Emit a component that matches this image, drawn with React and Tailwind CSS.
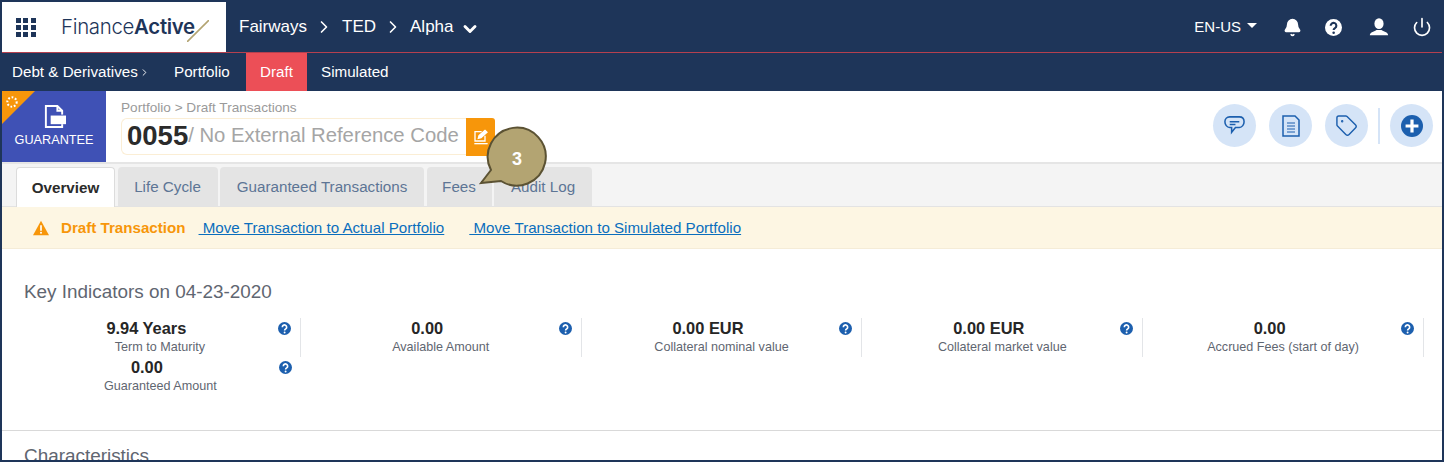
import { Bell, ChevronDown, ChevronRight, Power, Tag } from "lucide-react";

const tabs = ["Life Cycle", "Guaranteed Transactions", "Fees", "Audit Log"];
const tabWidths = ["w-[100px]", "w-[204px]", "w-[65px]", "w-[98px]"];

const indicators = [
  { value: "9.94 Years", label: "Term to Maturity" },
  { value: "0.00", label: "Available Amount" },
  { value: "0.00 EUR", label: "Collateral nominal value" },
  { value: "0.00 EUR", label: "Collateral market value" },
  { value: "0.00", label: "Accrued Fees (start of day)" },
];

function HelpDot() {
  return (
    <svg viewBox="0 0 24 24" className="h-[13px] w-[13px]">
      <circle cx="12" cy="12" r="12" fill="#1c5fae" />
      <path d="M8 9.5a4 4 0 1 1 6.3 3.2c-1.3.9-2.1 1.4-2.1 2.8" fill="none" stroke="#fff" strokeWidth="3" />
      <circle cx="12.2" cy="19.3" r="1.8" fill="#fff" />
    </svg>
  );
}

function Indicator({ value, label, divider = true }) {
  return (
    <div className={`relative flex h-[39px] flex-col items-center ${divider ? "border-r border-[#e3e5e8]" : ""}`}>
      <div className="pr-[27px] text-[16.4px] leading-[20px] font-bold text-[#262626]">{value}</div>
      <div className="mt-[1px] text-[12.6px] leading-[17px] text-[#5f6671]">{label}</div>
      <div className="absolute top-[4px] right-[9px]">
        <HelpDot />
      </div>
    </div>
  );
}

function RoundButton({ children }) {
  return (
    <div className="flex h-[43px] w-[43px] items-center justify-center rounded-full bg-[#d5e4f7]">{children}</div>
  );
}

export default function App() {
  return (
    <div className="h-[462px] w-[1444px] overflow-hidden border-2 border-[#1e3559] bg-white font-['Liberation_Sans',sans-serif]">
      {/* top bar */}
      <div className="flex h-[51px] items-stretch border-b border-[#b5404f] bg-[#1e3559]">
        <div className="flex w-[224px] items-center bg-white pl-[14px]">
          <div className="grid w-[20px] grid-cols-3 gap-[2px]">
            {Array.from({ length: 9 }).map((_, i) => (
              <div key={i} className="h-[5px] w-[5px] bg-[#1e3559]" />
            ))}
          </div>
          <div className="relative ml-[25px] font-['Inter',sans-serif] text-[20.4px] font-light tracking-[-0.3px] text-[#1e3559]">
            Finance<span className="font-semibold">Active</span>
            <svg viewBox="0 0 22 22" className="absolute top-[8px] -right-[14px] h-[22px] w-[22px]">
              <path d="M0 22 L22 0" stroke="#b3a472" strokeWidth="1.6" />
            </svg>
          </div>
        </div>
        <div className="flex items-center pl-[13px] text-[17px] text-white">
          <span>Fairways</span>
          <ChevronRight className="mr-[5px] ml-[7px] h-[20px] w-[20px]" strokeWidth={2} />
          <span className="ml-[3px]">TED</span>
          <ChevronRight className="mr-[5px] ml-[7px] h-[20px] w-[20px]" strokeWidth={2} />
          <span className="ml-[2px]">Alpha</span>
          <ChevronDown className="mt-[3px] ml-[6px] h-[20px] w-[20px]" strokeWidth={3.5} />
        </div>
        <div className="ml-auto flex items-center text-white">
          <span className="text-[15px]">EN-US</span>
          <div className="mb-[3px] ml-[6px] h-0 w-0 border-x-[5px] border-t-[5px] border-x-transparent border-t-white" />
          <Bell className="ml-[26px] h-[19px] w-[19px]" fill="#fff" />
          <div className="ml-[23px]">
            <svg viewBox="0 0 24 24" className="h-[17px] w-[17px]">
              <circle cx="12" cy="12" r="12" fill="#fff" />
              <path d="M8 9.5a4 4 0 1 1 6.3 3.2c-1.3.9-2.1 1.4-2.1 2.8" fill="none" stroke="#1e3559" strokeWidth="3" />
              <circle cx="12.2" cy="19.3" r="1.8" fill="#1e3559" />
            </svg>
          </div>
          <svg viewBox="0 0 24 24" className="ml-[27px] h-[20px] w-[20px]" fill="#fff">
            <ellipse cx="12" cy="8" rx="5.5" ry="6.5" />
            <path d="M1 22c0-4 6-5 8-6.5h6c2 1.500 8 2.500 8 6.500z" />
          </svg>
          <Power className="mr-[10px] ml-[23px] h-[20px] w-[20px]" strokeWidth={2} />
        </div>
      </div>

      {/* section nav */}
      <div className="flex h-[38px] items-stretch bg-[#1e3559] text-[15.2px] text-white">
        <div className="flex w-[172px] items-center pl-[10px]">
          Debt &amp; Derivatives
          <ChevronRight className="ml-[1px] h-[13px] w-[11px]" strokeWidth={2} />
        </div>
        <div className="flex w-[72px] items-center">Portfolio</div>
        <div className="flex w-[61px] items-center justify-center bg-[#ec4f57]">Draft</div>
        <div className="ml-[14px] flex items-center">Simulated</div>
      </div>

      {/* transaction header */}
      <div className="flex h-[73px] items-stretch border-b-2 border-[#e5e5e5] bg-white">
        <div className="relative flex w-[104px] flex-col items-center bg-[#3f51b5] pt-[14px] text-white">
          <div className="absolute top-0 left-0 h-0 w-0 border-t-[33px] border-r-[33px] border-t-[#f7960a] border-r-transparent" />
          <svg viewBox="0 0 24 24" className="absolute top-[4px] left-[3px] h-[14px] w-[14px]" fill="none">
            <circle cx="12" cy="12" r="8" stroke="#fff" strokeWidth="3.500" strokeDasharray="3 3" />
          </svg>
          <svg viewBox="0 0 24 24" className="h-[23px] w-[23px]">
            <path d="M3 1h12l5 5v17H3z" fill="none" stroke="#fff" strokeWidth="2" />
            <path d="M15 1v5h5" fill="none" stroke="#fff" strokeWidth="2" />
            <rect x="7" y="10" width="17" height="10" fill="#3f51b5" />
            <rect x="8" y="11" width="16" height="9" fill="#fff" />
          </svg>
          <div className="mt-[5px] text-[12.7px] leading-[15px]">GUARANTEE</div>
        </div>
        <div className="ml-[15px] flex flex-col pt-[9px]">
          <div className="text-[13.6px] leading-[15px] text-[#9a9a9a]">Portfolio &gt; Draft Transactions</div>
          <div className="mt-[3px] flex">
            <div className="flex h-[37px] w-[345px] items-center rounded-l-[6px] border border-r-0 border-[#fbeed5] pb-[2px] pl-[5px]">
              <span className="text-[27.5px] font-bold text-[#2b2b2b]">0055</span>
              <span className="text-[20.3px] text-[#a5a5a5]">/ No External Reference Code</span>
            </div>
            <div className="flex h-[38px] w-[29px] items-center justify-center rounded-r-[3px] bg-[#f7960a]">
              <svg viewBox="0 0 24 24" className="h-[16px] w-[16px]" fill="none" stroke="#fff" strokeWidth="2">
                <path d="M13 4H3v14h15V10" />
                <path d="M8 14l1-4L18 2l3 3-9 8z" fill="#fff" />
                <path d="M2 22h20" />
              </svg>
            </div>
          </div>
        </div>
        <div className="ml-auto flex items-center pr-[9px] pb-[2px]">
          <RoundButton>
            <svg viewBox="0 0 24 24" className="h-[23px] w-[23px]" fill="none" stroke="#1c5fae" strokeWidth="1.600">
              <path d="M7 3h10c3 0 5 2 5 5s-2 6-5 6h-4l-4 5v-5H7c-3 0-5-3-5-6s2-5 5-5z" />
              <path d="M7 8h10M7 11h6" />
            </svg>
          </RoundButton>
          <div className="ml-[13px]">
            <RoundButton>
              <svg viewBox="0 0 24 24" className="h-[24px] w-[24px]" fill="none" stroke="#1c5fae" strokeWidth="1.500">
                <path d="M4 2h12l4 4v16H4z" />
                <path d="M8 9h8M8 12h8M8 15h8M8 18h8" strokeWidth="1" />
              </svg>
            </RoundButton>
          </div>
          <div className="ml-[13px]">
            <RoundButton>
              <Tag className="h-[23px] w-[23px] text-[#1c5fae]" strokeWidth={1.500} />
            </RoundButton>
          </div>
          <div className="mx-[10px] h-[36px] w-[2px] bg-[#d5e4f7]" />
          <RoundButton>
            <svg viewBox="0 0 24 24" className="h-[22px] w-[22px]">
              <circle cx="12" cy="12" r="12" fill="#1c5fae" />
              <path d="M12 5v14M5 12h14" stroke="#fff" strokeWidth="3.500" />
            </svg>
          </RoundButton>
        </div>
      </div>

      {/* tabs */}
      <div className="relative flex h-[43px] items-end gap-[2.5px] border-b border-[#e3e3e3] bg-[#f4f4f4] pl-[14px]">
        <div className="-mb-[1px] flex h-[40px] w-[99px] items-center justify-center rounded-t-[4px] border border-b-0 border-[#dcdcdc] bg-white pt-[2px] text-[15.2px] font-bold text-[#2b2b2b]">
          Overview
        </div>
        {tabs.map((tab, i) => (
          <div
            key={tab}
            className={`flex h-[39px] items-center justify-center rounded-t-[4px] bg-[#e4e4e4] pt-[2px] text-[15.2px] text-[#5d7595] ${tabWidths[i]}`}
          >
            {tab}
          </div>
        ))}
        {/* callout */}
        <svg viewBox="0 0 74 66" className="absolute -top-[40px] left-[474px] h-[66px] w-[74px] overflow-visible">
          <path
            d="M5 59 L15 46 A29 29 0 1 1 25 57 Z"
            fill="#b3a472"
            stroke="#5b5233"
            strokeWidth="2"
          />
        </svg>
        <div className="absolute -top-[18px] left-[510px] text-[18px] font-bold text-white">3</div>
      </div>

      {/* draft alert */}
      <div className="flex h-[42px] items-center border-b border-[#f5ecd7] bg-[#fdf6e3] pt-[1px] pl-[31px] text-[15.15px]">
        <svg viewBox="0 0 24 24" className="h-[16px] w-[16px]">
          <path d="M12 1 L24 23 H0 Z" fill="#f7960a" />
          <path d="M12 8v8" stroke="#fff" strokeWidth="2.500" />
          <circle cx="12" cy="19" r="1.500" fill="#fff" />
        </svg>
        <span className="ml-[12px] font-bold text-[#f7960a]">Draft Transaction</span>
        <span className="ml-[13px] text-[#0a6ebd] underline">&nbsp;Move Transaction to Actual Portfolio</span>
        <span className="ml-[25px] text-[#0a6ebd] underline">&nbsp;Move Transaction to Simulated Portfolio</span>
      </div>

      {/* key indicators */}
      <div className="h-[182px] border-b border-[#d9d9d9] px-[18px] pt-[31px]">
        <div className="pl-[4px] text-[18.9px] leading-[24px] text-[#5f6671]">Key Indicators on 04-23-2020</div>
        <div className="mt-[14px] grid grid-cols-5">
          {indicators.map((item) => (
            <Indicator key={item.label} value={item.value} label={item.label} />
          ))}
          <Indicator value="0.00" label="Guaranteed Amount" divider={false} />
        </div>
      </div>
      <div className="px-[22px] pt-[13px] text-[18.9px] leading-[24px] text-[#5f6671]">Characteristics</div>
    </div>
  );
}
